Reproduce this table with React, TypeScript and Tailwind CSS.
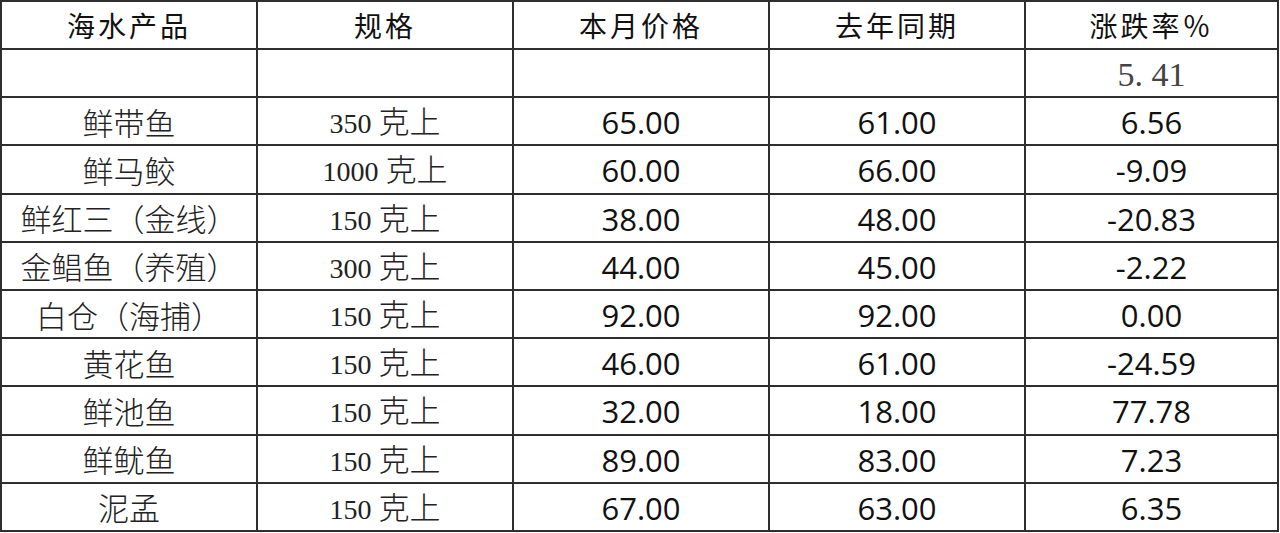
const rows = [
  { name: '鲜带鱼', spec: '350', now: '65.00', last: '61.00', rate: '6.56' },
  { name: '鲜马鲛', spec: '1000', now: '60.00', last: '66.00', rate: '-9.09' },
  { name: '鲜红三（金线）', spec: '150', now: '38.00', last: '48.00', rate: '-20.83' },
  { name: '金鲳鱼（养殖）', spec: '300', now: '44.00', last: '45.00', rate: '-2.22' },
  { name: '白仓（海捕）', spec: '150', now: '92.00', last: '92.00', rate: '0.00' },
  { name: '黄花鱼', spec: '150', now: '46.00', last: '61.00', rate: '-24.59' },
  { name: '鲜池鱼', spec: '150', now: '32.00', last: '18.00', rate: '77.78' },
  { name: '鲜鱿鱼', spec: '150', now: '89.00', last: '83.00', rate: '7.23' },
  { name: '泥孟', spec: '150', now: '67.00', last: '63.00', rate: '6.35' },
]

const headers = ['海水产品', '规格', '本月价格', '去年同期', '涨跌率％']

const cjk = "font-['Noto_Sans_CJK_SC',sans-serif]"
const num = "font-['Open_Sans','DejaVu_Sans',sans-serif] text-[31px] text-[#111] pt-[3px]"
const cell = 'border-2 border-[#2e2e2e] text-center align-middle p-0 leading-none'

export default function App() {
  return (
    <div className="w-[1280px] h-[533px] bg-white overflow-hidden">
      <table className="table-fixed border-collapse w-[1279px] h-[532px]">
        <colgroup>
          <col className="w-[256px]" />
          <col className="w-[256px]" />
          <col className="w-[256px]" />
          <col className="w-[256px]" />
          <col />
        </colgroup>
        <thead>
          <tr className="h-[48px]">
            {headers.map((h) => (
              <th
                key={h}
                className={`${cell} ${cjk} text-[28px] font-normal tracking-[3px] text-[#111]`}
              >
                {h}
              </th>
            ))}
          </tr>
        </thead>
        <tbody>
          <tr className="h-[48px]">
            <td className={cell} />
            <td className={cell} />
            <td className={cell} />
            <td className={cell} />
            <td className={`${cell} font-['Liberation_Serif',serif] text-[34px] text-[#444] pt-[4px]`}>
              5.&nbsp;41
            </td>
          </tr>
          {rows.map((r) => (
            <tr key={r.name} className="h-[48px]">
              <td className={`${cell} ${cjk} text-[31px] font-light text-[#222]`}>{r.name}</td>
              <td className={`${cell} text-[#222]`}>
                <span className="font-['Liberation_Serif',serif] text-[28px]">{r.spec} </span>
                <span className={`${cjk} font-light text-[31px]`}>克上</span>
              </td>
              <td className={`${cell} ${num}`}>{r.now}</td>
              <td className={`${cell} ${num}`}>{r.last}</td>
              <td className={`${cell} ${num}`}>{r.rate}</td>
            </tr>
          ))}
        </tbody>
      </table>
    </div>
  )
}
